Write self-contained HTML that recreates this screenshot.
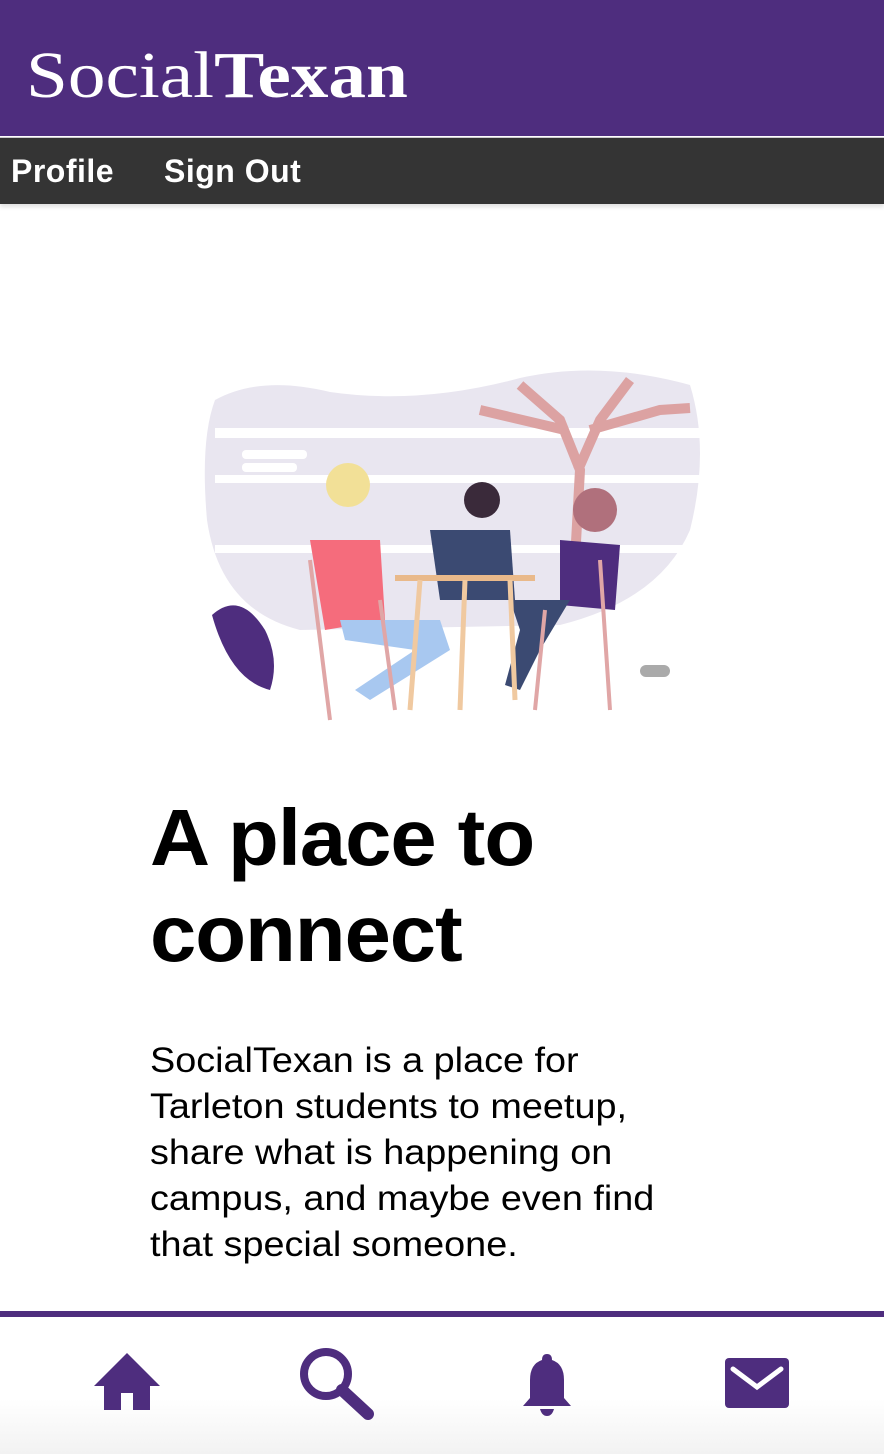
<!DOCTYPE html>
<html><head><meta charset="utf-8"><style>
*{margin:0;padding:0;box-sizing:border-box}
body{width:884px;height:1454px;background:#fff;position:relative;overflow:hidden;font-family:"Liberation Sans",sans-serif}
.hdr{position:absolute;left:0;top:0;width:884px;height:136px;background:#4e2d7e}
.logo{position:absolute;left:26px;top:36px;font-family:"Liberation Serif",serif;color:#fff;font-size:66px;line-height:80px;transform:scaleX(1.14);transform-origin:left}
.logo b{font-weight:bold}
.nav{position:absolute;left:0;top:137px;width:884px;height:67px;background:#343434;border-top:1px solid #ccc;box-shadow:0 3px 4px rgba(0,0,0,.12)}
.nav span{position:absolute;top:15px;color:#fff;font-weight:bold;font-size:32px;letter-spacing:0.5px}
h1{position:absolute;left:150px;top:790px;font-size:80px;line-height:96px;font-weight:900;color:#000;letter-spacing:-1px;transform:scaleX(1.04);transform-origin:left}
p{position:absolute;left:150px;top:1038px;width:540px;font-size:35px;line-height:46px;color:#000;transform:scaleX(1.08);transform-origin:left}
.foot{position:absolute;left:0;top:1311px;width:884px;height:143px;border-top:6px solid #4e2d7e;background:linear-gradient(#fff 60%,#f2f2f2)}
.ic{position:absolute}
</style></head><body>
<div class="hdr"><div class="logo">Social<b>Texan</b></div></div>
<div class="nav"><span style="left:11px">Profile</span><span style="left:164px">Sign Out</span></div>
<svg style="position:absolute;left:195px;top:360px" width="510" height="370" viewBox="195 360 510 370">
<path d="M215 400 Q260 375 330 392 Q420 405 520 378 Q600 360 690 385 Q710 450 690 530 Q660 600 560 625 L300 630 Q220 610 207 520 Q200 440 215 400Z" fill="#e9e6f0"/>
<rect x="215" y="428" width="485" height="10" fill="#fff"/>
<rect x="215" y="475" width="485" height="8" fill="#fff"/>
<rect x="215" y="545" width="485" height="8" fill="#fff"/>
<rect x="242" y="450" width="65" height="9" rx="4" fill="#fff"/>
<rect x="242" y="463" width="55" height="9" rx="4" fill="#fff"/>
<path d="M575 560 L580 470 L560 420 L520 385 M578 470 L600 420 L630 380 M590 430 L660 410 L690 408 M565 430 L480 410" stroke="#dca2a2" stroke-width="10" fill="none"/>
<path d="M212 615 Q240 590 265 630 Q280 660 270 690 Q230 680 212 615Z" fill="#4e2d7e"/>
<path d="M310 540 L380 540 L385 620 L325 630Z" fill="#f56c7c"/>
<circle cx="348" cy="485" r="22" fill="#f2e097"/>
<path d="M340 620 L440 620 L450 650 L370 700 L355 690 L415 650 L345 640Z" fill="#a8c8f0"/>
<path d="M430 530 L510 530 L515 600 L440 600Z" fill="#3b4a72"/>
<circle cx="482" cy="500" r="18" fill="#3a2a3a"/>
<path d="M560 540 L620 545 L615 610 L560 605Z" fill="#4e2d7e"/>
<circle cx="595" cy="510" r="22" fill="#b0707c"/>
<path d="M510 600 L570 600 L540 650 L520 690 L505 685 L520 630Z" fill="#3b4a72"/>
<rect x="395" y="575" width="140" height="6" fill="#e9b98a"/>
<path d="M420 580 L410 710 M465 580 L460 710 M510 580 L515 700" stroke="#f0c9a0" stroke-width="5"/>
<path d="M310 560 L330 720 M380 600 L395 710 M600 560 L610 710 M545 610 L535 710" stroke="#e0a6a6" stroke-width="4"/>
<rect x="640" y="665" width="30" height="12" rx="6" fill="#aaa"/>
</svg>
<h1>A place to<br>connect</h1>
<p>SocialTexan is a place for<br>Tarleton students to meetup,<br>share what is happening on<br>campus, and maybe even find<br>that special someone.</p>
<div class="foot"></div>
<svg class="ic" style="left:93px;top:1350px" width="68" height="62" viewBox="0 0 68 62"><path d="M34 3 L67 36 L57 36 L57 60 L40 60 L40 43 L28 43 L28 60 L11 60 L11 36 L1 36Z" fill="#4e2d7e"/></svg>
<svg class="ic" style="left:298px;top:1346px" width="80" height="76" viewBox="0 0 80 76"><circle cx="28" cy="28" r="22" fill="none" stroke="#4e2d7e" stroke-width="8"/><path d="M44 44 L70 68" stroke="#4e2d7e" stroke-width="12" stroke-linecap="round"/></svg>
<svg class="ic" style="left:520px;top:1352px" width="54" height="64" viewBox="0 0 54 64"><path d="M27 2 Q32 2 32 8 Q44 12 44 28 L44 46 L51 54 L3 54 L10 46 L10 28 Q10 12 22 8 Q22 2 27 2Z" fill="#4e2d7e"/><path d="M20 57 L34 57 Q32 64 27 64 Q22 64 20 57Z" fill="#4e2d7e"/></svg>
<svg class="ic" style="left:725px;top:1358px" width="64" height="50" viewBox="0 0 64 50"><rect x="0" y="0" width="64" height="50" rx="4" fill="#4e2d7e"/><path d="M8 11 L32 29 L56 11" stroke="#fff" stroke-width="5" fill="none" stroke-linecap="round"/></svg>
</body></html>
